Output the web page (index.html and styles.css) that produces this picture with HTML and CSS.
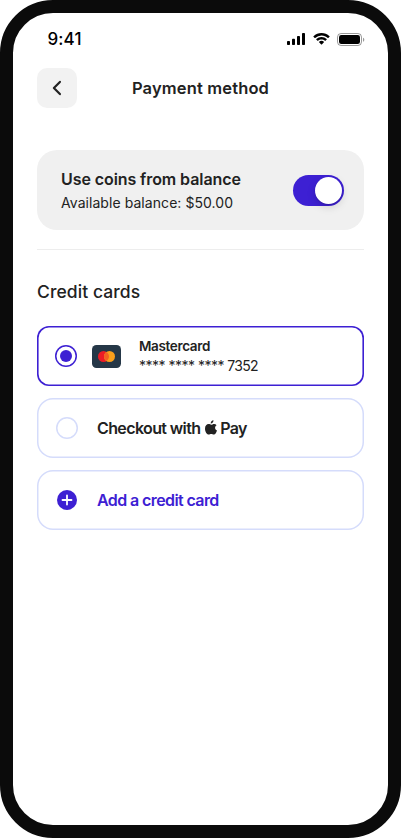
FILE: index.html
```html
<!DOCTYPE html>
<html lang="en">
<head>
<meta charset="utf-8">
<title>Payment method</title>
<link rel="stylesheet" href="styles.css">
</head>
<body>
<main class="phone">
  <div class="status">
    <span class="time">9:41</span>
    <div class="status-icons">
      <svg width="18" height="12" viewBox="0 0 18 12"><rect x="0" y="8" width="3" height="4" rx=".8"/><rect x="5" y="5.8" width="3" height="6.2" rx=".8"/><rect x="10" y="3" width="3" height="9" rx=".8"/><rect x="15" y="0" width="3" height="12" rx=".8"/></svg>
      <svg width="17" height="12" viewBox="0 0 17 12"><path d="M8.5 2.5c2.4 0 4.6.9 6.3 2.5.1.1.3.1.5 0l1.2-1.2c.2-.2.2-.4 0-.5a11.6 11.6 0 0 0-16 0c-.2.1-.2.3 0 .5L1.7 5c.2.1.4.1.5 0a9.200 9.200 0 0 1 6.300-2.500zM8.500 6.400c1.300 0 2.600.5 3.500 1.400.2.100.400.100.500 0l1.200-1.300c.2-.1.2-.4 0-.5a7.600 7.600 0 0 0-10.400 0c-.2.100-.2.400 0 .5l1.200 1.300c.1.100.300.100.500 0 .9-.9 2.200-1.400 3.500-1.400zM10.900 9.200c.2-.1.200-.4 0-.5a3.800 3.800 0 0 0-4.800 0c-.2.100-.2.400 0 .5l2.100 2.200c.2.200.400.200.600 0z"/></svg>
      <svg width="27" height="13" viewBox="0 0 27 13"><rect x=".5" y=".5" width="24" height="12" rx="3.600" fill="none" stroke="#000" stroke-opacity=".4"/><rect x="2" y="2" width="21" height="9" rx="2.300"/><path d="M26 4.700v4c.8-.35 1.300-1.100 1.300-2s-.5-1.650-1.300-2z" opacity=".4"/></svg>
    </div>
  </div>
  <header class="header">
    <button class="back" aria-label="Back"><svg width="10" height="16" viewBox="0 0 10 16"><path d="M7.900 1.900 1.900 8l6 6.100"/></svg></button>
    <h1>Payment method</h1>
  </header>
  <section class="balance">
    <div>
      <h2>Use coins from balance</h2>
      <p>Available balance: $50.00</p>
    </div>
    <span class="toggle"><span class="knob"></span></span>
  </section>
  <section class="cards">
    <h2>Credit cards</h2>
    <div class="option selected">
      <span class="radio"></span>
      <svg class="brand" width="29" height="23" viewBox="0 0 29 23"><rect width="29" height="23" rx="4.500" fill="#253747"/><circle cx="11.500" cy="11.500" r="5.500" fill="#eb1c26"/><circle cx="17.500" cy="11.500" r="5.500" fill="#f99f1b"/><path d="M14.500 6.900a5.500 5.500 0 0 1 0 9.200 5.500 5.500 0 0 1 0-9.200z" fill="#f26122"/></svg>
      <div class="details"><b>Mastercard</b><span class="number"><span class="mask">**** **** ****</span> 7352</span></div>
    </div>
    <div class="option">
      <span class="radio"></span>
      <span class="label">Checkout with <svg class="apple" width="12" height="15" viewBox="0 0 12 15"><path d="M8.500.2c.1 1.700-1.200 3.200-2.800 3.300C5.500 1.900 6.900.4 8.500.2zM11.600 5.200c-2.200 1.300-1.900 4.200.4 5.200-.5 1.500-1.700 4.100-3.100 4.200-1 .1-1.500-.6-2.600-.6-1.200 0-1.600.6-2.600.6C1.700 14.600 0 11.400 0 8.700 0 5.700 1.800 4.100 3.600 4.100c1.100 0 2 .7 2.700.7.600 0 1.600-.8 2.900-.8.900 0 1.800.4 2.400 1.200z"/></svg> Pay</span>
    </div>
    <div class="option">
      <svg class="plus" width="20" height="20" viewBox="0 0 20 20"><circle cx="10" cy="10" r="10" fill="#3d20d3"/><path d="M10 5.500v9M5.500 10h9" stroke="#fff" stroke-width="1.800" stroke-linecap="round"/></svg>
      <span class="label add">Add a credit card</span>
    </div>
  </section>
</main>
</body>
</html>
```
FILE: styles.css
```css
* { box-sizing: border-box; }
body { margin: 0; background: #fff; font-family: Inter, sans-serif; color: #222; }
h1, h2, p { margin: 0; }
svg { display: block; flex: none; }
.phone { width: 401px; height: 838px; border: 13px solid #0b0b0b; border-radius: 53px; background: #fff; padding: 0 24px; }
.status { height: 55px; padding: 0 0 3px 10.500px; display: flex; align-items: center; justify-content: space-between; color: #000; }
.time { font-size: 17px; font-weight: 500; line-height: 20px; letter-spacing: .1px; }
.status-icons { display: flex; align-items: center; gap: 8px; }
.status-icons svg:last-child { margin-left: -1px; overflow: visible; }
.header { height: 40px; display: grid; grid-template-columns: 40px 1fr 40px; align-items: center; }
.back { width: 40px; height: 40px; padding: 0; border: 0; border-radius: 10px; background: #f2f2f2; display: grid; place-items: center; }
.back path { fill: none; stroke: #222; stroke-width: 2.200; stroke-linecap: round; stroke-linejoin: round; }
h1 { font-size: 16.500px; line-height: 24px; font-weight: 600; text-align: center; letter-spacing: .15px; }
.balance { height: 80px; margin-top: 42px; padding: 0 20px 0 24px; border-radius: 20px; background: #f0f0f0; display: flex; align-items: center; justify-content: space-between; }
.balance h2 { font-size: 16px; line-height: 24px; font-weight: 600; letter-spacing: -.08px; }
.balance p { font-size: 14px; line-height: 24px; letter-spacing: .06px; }
.balance div { padding-top: 1px; }
.toggle { width: 51px; height: 31px; border-radius: 16px; background: #3d20d3; padding: 2px; display: flex; justify-content: flex-end; }
.knob { width: 27px; height: 27px; border-radius: 50%; background: #fff; box-shadow: 0 3px 8px rgba(0,0,0,.15), 0 1px 1px rgba(0,0,0,.12); }
.cards { margin-top: 19px; border-top: 1px solid #ededed; padding-top: 30px; display: flex; flex-direction: column; gap: 12px; }
.cards h2 { font-size: 17.500px; line-height: 24px; font-weight: 500; margin-bottom: 10px; letter-spacing: .08px; }
.option { height: 60px; box-shadow: inset 0 0 0 1.500px #d5dcfb; border-radius: 16px; padding-left: 19px; display: flex; align-items: center; }
.selected { box-shadow: inset 0 0 0 1.600px #3d20d3; border-radius: 12px; padding-left: 18px; }
.radio { width: 22px; height: 22px; flex: none; box-shadow: inset 0 0 0 1.500px #d5dcfb; border-radius: 50%; display: grid; place-items: center; }
.selected .radio { box-shadow: inset 0 0 0 1.500px #3d20d3; }
.selected .radio::before { content: ""; width: 12px; height: 12px; border-radius: 50%; background: #3d20d3; }
.brand { margin-left: 15px; }
.details { margin-left: 18px; display: flex; flex-direction: column; line-height: 20px; font-size: 14px; }
.details b { font-weight: 600; font-size: 13.500px; letter-spacing: -.35px; }
.number { letter-spacing: -.7px; }
.mask { letter-spacing: -.5px; }
.label { margin-left: 19px; font-size: 16px; font-weight: 600; display: flex; align-items: center; white-space: pre; letter-spacing: -.62px; }
.apple { fill: #222; margin: -1px 0 0 1px; }
.plus { margin-left: 1px; }
.add { margin-left: 20px; color: #3d20d3; letter-spacing: -.6px; }
```
